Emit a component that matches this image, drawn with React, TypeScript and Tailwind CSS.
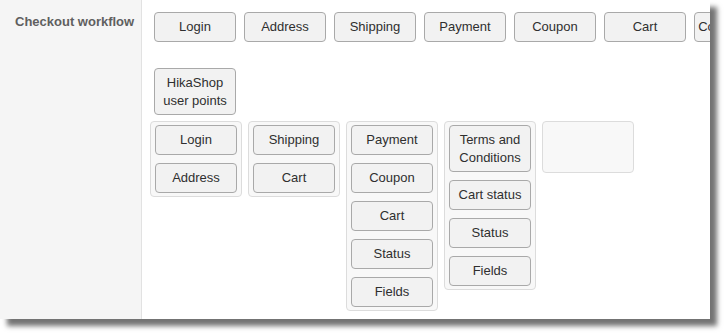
import React from 'react';

const topRow = ['Login', 'Address', 'Shipping', 'Payment', 'Coupon', 'Cart', 'Confirmation', 'Status'];

const groups: string[][] = [
  ['Login', 'Address'],
  ['Shipping', 'Cart'],
  ['Payment', 'Coupon', 'Cart', 'Status', 'Fields'],
  ['Terms and Conditions', 'Cart status', 'Status', 'Fields'],
  [],
];

const twoLine = (label: string) => label === 'Terms and Conditions' || label === 'HikaShop user points';

const StepButton: React.FC<{ label: string }> = ({ label }) => (
  <div
    className={`flex-none w-[82px] flex items-center justify-center text-center rounded-[4px] border border-[#a9a9a9] bg-[#f2f2f2] text-[13px] text-[#2f2f2f] ${
      twoLine(label) ? 'h-[47px] leading-[18px] px-1' : 'h-[30px] leading-[16px] whitespace-nowrap'
    }`}
  >
    {label}
  </div>
);

const App: React.FC = () => {
  return (
    <div className="w-[725px] h-[334px] bg-white" style={{ fontFamily: '"Liberation Sans", Arial, sans-serif' }}>
      <div className="w-[710px] h-[319px] bg-white flex overflow-hidden shadow-[7px_7px_5px_rgba(0,0,0,0.55)]">
        {/* Label column */}
        <div className="w-[142px] flex-none bg-[#f5f5f5] border-r border-[#e2e2e2] pl-[15px] pt-[9px]">
          <span className="text-[13px] font-bold text-[#5f5f5f]">Checkout workflow</span>
        </div>

        {/* Workflow editor */}
        <div className="flex-1 min-w-0 overflow-hidden pl-2 pt-3">
          <div className="flex gap-2 pl-1">
            {topRow.map((s, i) => (
              <StepButton key={i} label={s} />
            ))}
          </div>

          <div className="pl-1 mt-[26px]">
            <StepButton label="HikaShop user points" />
          </div>

          <div className="flex items-start gap-[6px] mt-[6px]">
            {groups.map((g, i) => (
              <div
                key={i}
                className={`w-[92px] flex-none flex flex-col gap-2 px-1 py-[3px] border border-[#dcdcdc] rounded-[4px] bg-[#f8f8f8] ${
                  g.length === 0 ? 'h-[52px]' : ''
                }`}
              >
                {g.map((s, j) => (
                  <StepButton key={j} label={s} />
                ))}
              </div>
            ))}
          </div>
        </div>
      </div>
    </div>
  );
};

export default App;
